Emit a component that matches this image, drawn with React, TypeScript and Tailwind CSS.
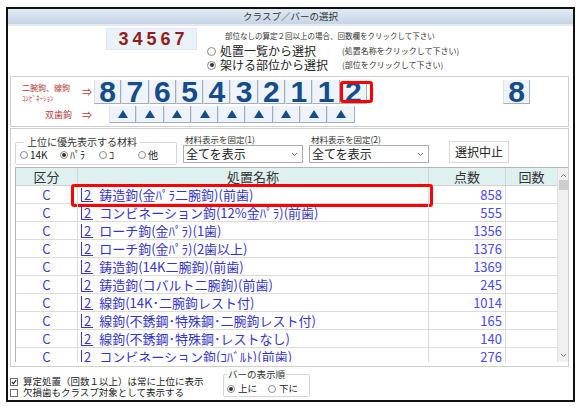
import React from "react"

const rows: [string, number][] = [
  ["鋳造鉤(金ﾊﾟﾗ二腕鉤)(前歯)", 858],
  ["コンビネーション鉤(12%金ﾊﾟﾗ)(前歯)", 555],
  ["ローチ鉤(金ﾊﾟﾗ)(1歯)", 1356],
  ["ローチ鉤(金ﾊﾟﾗ)(2歯以上)", 1376],
  ["鋳造鉤(14K二腕鉤)(前歯)", 1369],
  ["鋳造鉤(コバルト二腕鉤)(前歯)", 245],
  ["線鉤(14K･二腕鉤レスト付)", 1014],
  ["線鉤(不銹鋼･特殊鋼･二腕鉤レスト付)", 165],
  ["線鉤(不銹鋼･特殊鋼･レストなし)", 140],
  ["コンビネーション鉤(ｺﾊﾞﾙﾄ)(前歯)", 276],
]

const digits = ["8", "7", "6", "5", "4", "3", "2", "1", "1", "2"]

function Radio({ checked, size = "h-[9px] w-[9px]" }: { checked?: boolean; size?: string }) {
  return (
    <span className={`inline-flex shrink-0 items-center justify-center rounded-full border border-[#8a8a8a] bg-white ${size}`}>
      {checked ? <span className="h-[4px] w-[4px] rounded-full bg-[#333]" /> : null}
    </span>
  )
}

function Check({ checked }: { checked?: boolean }) {
  return (
    <span className="inline-flex h-[8px] w-[8px] shrink-0 items-center justify-center border border-[#6f6f6f] bg-white">
      {checked ? (
        <svg width="6" height="6" viewBox="0 0 6 6">
          <path d="M0.8 3 L2.4 4.6 L5.2 1.2" stroke="#222" strokeWidth="1.1" fill="none" />
        </svg>
      ) : null}
    </span>
  )
}

function DigitKey({ n, mark }: { n: string; mark?: boolean }) {
  return (
    <div className="relative flex h-[24px] w-[27.3px] shrink-0 items-center justify-center border-l border-r border-b border-l-[#dbe3ea] border-r-[#a3aeb9] border-b-[#a3aeb9] bg-[#eef4f9] font-['Liberation_Sans',Arial,sans-serif] text-[30px] font-bold leading-[24px] text-[#154c8a]">
      {n}
      {mark ? (
        <div className="absolute left-[-0.3px] top-[0.7px] h-[22px] w-[33px] rounded-[3px] border-[3px] border-[#ff0000]" />
      ) : null}
    </div>
  )
}

function TriKey() {
  return (
    <div className="flex h-[17px] w-[27.3px] shrink-0 items-center justify-center border-l border-r border-b border-l-[#dbe3ea] border-r-[#a3aeb9] border-b-[#a3aeb9] bg-[#eef4f9]">
      <svg width="10" height="8" viewBox="0 0 10 8">
        <polygon points="5,0 10,8 0,8" fill="#154c8a" />
      </svg>
    </div>
  )
}

function FakeSelect({ label }: { label: string }) {
  return (
    <div className="flex w-[120px] shrink-0 flex-col pt-[5px]">
      <div className="pl-[2px] text-[8.5px] leading-[10px] text-[#333]">{label}</div>
      <div className="mt-[1px] flex h-[18px] items-center justify-between border border-[#abadb3] bg-white pl-[2px] pr-[4px]">
        <span className="text-[12px] leading-[16px] text-[#222]">全てを表示</span>
        <svg width="7" height="5" viewBox="0 0 7 5">
          <path d="M1 1 L3.5 3.5 L6 1" stroke="#666" fill="none" strokeWidth="1" />
        </svg>
      </div>
    </div>
  )
}

export default function App() {
  return (
    <div className="h-[407px] w-[581px] bg-white pl-[6px] pt-[7px] font-['Noto_Sans_CJK_JP',sans-serif] text-[#222]">
      <div className="flex h-[395px] w-[569px] flex-col border-2 border-[#111] bg-white">
        {/* title bar */}
        <div className="flex h-[17px] shrink-0 items-center justify-center border-b-2 border-[#e4eaf0] bg-gradient-to-b from-[#e2eaf4] to-[#c6d5e5] text-[9.5px] leading-[15px] text-[#333]">
          クラスプ／バーの選択
        </div>

        {/* top section */}
        <div className="flex h-[50px] shrink-0 pl-[98px]">
          <div className="mt-[2px] flex h-[22px] w-[91px] items-center justify-center border border-[#e0e8f0] bg-[#e9f1f9] pl-[4px] font-['Liberation_Sans',Arial,sans-serif] text-[18px] font-bold tracking-[4px] text-[#941c1c]">
            34567
          </div>
          <div className="ml-[10px] flex flex-col pt-[5px]">
            <div className="pl-[18px] text-[7.5px] leading-[9px] text-[#333]">
              部位なしの算定２回以上の場合、回数欄をクリックして下さい
            </div>
            <div className="mt-[4px] flex h-[14px] items-center">
              <Radio />
              <span className="ml-[4px] w-[122px] text-[12px] leading-[14px]">処置一覧から選択</span>
              <span className="text-[8px] leading-[10px] text-[#333]">(処置名称をクリックして下さい)</span>
            </div>
            <div className="flex h-[14px] items-center">
              <Radio checked />
              <span className="ml-[4px] w-[122px] text-[12px] leading-[14px]">架ける部位から選択</span>
              <span className="text-[8px] leading-[10px] text-[#333]">(部位をクリックして下さい)</span>
            </div>
          </div>
        </div>

        {/* tooth panel */}
        <div className="ml-[2px] h-[51px] w-[559px] shrink-0 border border-[#cfcfcf] pt-[3px]">
          <div className="flex">
            <div className="flex w-[83px] shrink-0 items-center pl-[11px]">
              <div className="flex w-[60px] flex-col text-[#b33a3a]">
                <span className="mt-[1px] text-[8px] leading-[10px]">二腕鉤、線鉤</span>
                <span className="text-[7px] leading-[10px]">ｺﾝﾋﾞﾈｰｼｮﾝ</span>
              </div>
              <span className="text-[10px] leading-[12px] text-[#b33a3a]">⇒</span>
            </div>
            {digits.map((d, i) => (
              <DigitKey key={i} n={d} mark={i === digits.length - 1} />
            ))}
            <div className="ml-[136px]">
              <DigitKey n="8" />
            </div>
          </div>
          <div className="mt-[2px] flex">
            <div className="flex w-[98px] shrink-0 items-center pl-[34px] text-[#b33a3a]">
              <span className="w-[37px] text-[9px] leading-[12px]">双歯鉤</span>
              <span className="text-[10px] leading-[12px]">⇒</span>
            </div>
            {Array.from({ length: 9 }).map((_, i) => (
              <TriKey key={i} />
            ))}
          </div>
        </div>

        {/* list panel */}
        <div className="ml-[2px] mt-[1px] flex h-[239px] w-[559px] shrink-0 flex-col border border-[#cfcfcf]">
          <div className="flex h-[38px] shrink-0">
            <fieldset className="ml-[4px] mt-[7px] h-[29px] w-[162px] shrink-0 rounded-[2px] border border-[#d6d6d6] pl-[4px]">
              <legend className="ml-[4px] px-[3px] text-[10px] leading-[12px] text-[#333]">上位に優先表示する材料</legend>
              <div className="flex h-[14px] items-center text-[10px] leading-[12px]">
                <span className="flex w-[40px] items-center gap-[2px]"><Radio size="h-[8px] w-[8px]" />14K</span>
                <span className="flex w-[39px] items-center gap-[2px]"><Radio checked size="h-[8px] w-[8px]" />ﾊﾟﾗ</span>
                <span className="flex w-[39px] items-center gap-[2px]"><Radio size="h-[8px] w-[8px]" />ｺ</span>
                <span className="flex w-[30px] items-center gap-[2px]"><Radio size="h-[8px] w-[8px]" />他</span>
              </div>
            </fieldset>
            <div className="ml-[6px]">
              <FakeSelect label="材料表示を固定(1)" />
            </div>
            <div className="ml-[6px]">
              <FakeSelect label="材料表示を固定(2)" />
            </div>
            <button
              type="button"
              className="ml-[20px] mt-[12px] flex h-[22px] w-[60px] items-center justify-center border border-[#dadada] bg-[#fdfdfd] text-[12px] leading-[16px] text-[#222]"
            >
              選択中止
            </button>
          </div>

          {/* table */}
          <div className="ml-[4px] flex h-[195px] w-[553px] overflow-hidden border-l border-t border-[#b5b5b5]">
            <div className="flex w-[541px] flex-col">
              <div className="flex h-[18px] shrink-0 border-b border-[#d4d4d4] bg-[#dff0f0] text-[13px] leading-[18px] text-[#333]">
                <div className="w-[62px] border-r border-[#d4d4d4] text-center">区分</div>
                <div className="w-[351px] border-r border-[#d4d4d4] text-center">処置名称</div>
                <div className="w-[77px] border-r border-[#d4d4d4] text-center">点数</div>
                <div className="w-[51px] text-center">回数</div>
              </div>
              {rows.map(([name, pts], i) => (
                <div key={i} className="relative flex h-[18px] shrink-0 border-b border-[#dcdcdc] text-[13px] leading-[17px]">
                  <div className="w-[62px] border-r border-[#dcdcdc] text-center text-[#3b3bd6]">C</div>
                  <div className="flex w-[351px] items-center whitespace-nowrap border-r border-[#dcdcdc] pl-[3px] text-[#3434c8]">
                    <span className="border-b border-l border-[#3434c8] pl-[2px] pr-[2px] leading-[13px]">2</span>
                    <span className="ml-[6px]">{name}</span>
                  </div>
                  <div className="w-[77px] border-r border-[#dcdcdc] pr-[3px] text-right text-[#4a4aee]">{pts}</div>
                  <div className="w-[51px]" />
                  {i === 0 ? (
                    <div className="absolute left-[55px] top-[-2px] h-[23px] w-[362px] rounded-[3px] border-[3px] border-[#ff0000]" />
                  ) : null}
                </div>
              ))}
            </div>
            <div className="flex w-[11px] flex-col items-center border-l border-[#e0e0e0] bg-[#f0f0f0]">
              <svg className="mt-[5px]" width="7" height="5" viewBox="0 0 7 5">
                <path d="M1 4 L3.5 1.5 L6 4" stroke="#777" fill="none" strokeWidth="1" />
              </svg>
              <div className="mt-[2px] h-[10px] w-[9px] bg-[#cdcdcd]" />
              <div className="flex-1" />
              <svg className="mb-[4px]" width="7" height="5" viewBox="0 0 7 5">
                <path d="M1 1 L3.5 3.5 L6 1" stroke="#777" fill="none" strokeWidth="1" />
              </svg>
            </div>
          </div>
        </div>

        {/* footer */}
        <div className="flex pl-[2px]">
          <div className="flex w-[213px] flex-col pt-[9px] text-[9.5px] leading-[11px]">
            <div className="flex items-center gap-[5px]">
              <Check checked />
              <span>算定処置（回数１以上）は常に上位に表示</span>
            </div>
            <div className="flex items-center gap-[5px]">
              <Check />
              <span>欠損歯もクラスプ対象として表示する</span>
            </div>
          </div>
          <fieldset className="mt-[2px] h-[28px] w-[87px] rounded-[2px] border border-[#d6d6d6] pl-[3px]">
            <legend className="ml-[0px] px-[1px] text-[9.5px] leading-[10px] text-[#333]">バーの表示順</legend>
            <div className="mt-[4px] flex items-center text-[9.5px] leading-[11px]">
              <span className="flex w-[41px] items-center gap-[3px]"><Radio checked size="h-[8px] w-[8px]" />上に</span>
              <span className="flex items-center gap-[3px]"><Radio size="h-[8px] w-[8px]" />下に</span>
            </div>
          </fieldset>
        </div>
      </div>
    </div>
  )
}
